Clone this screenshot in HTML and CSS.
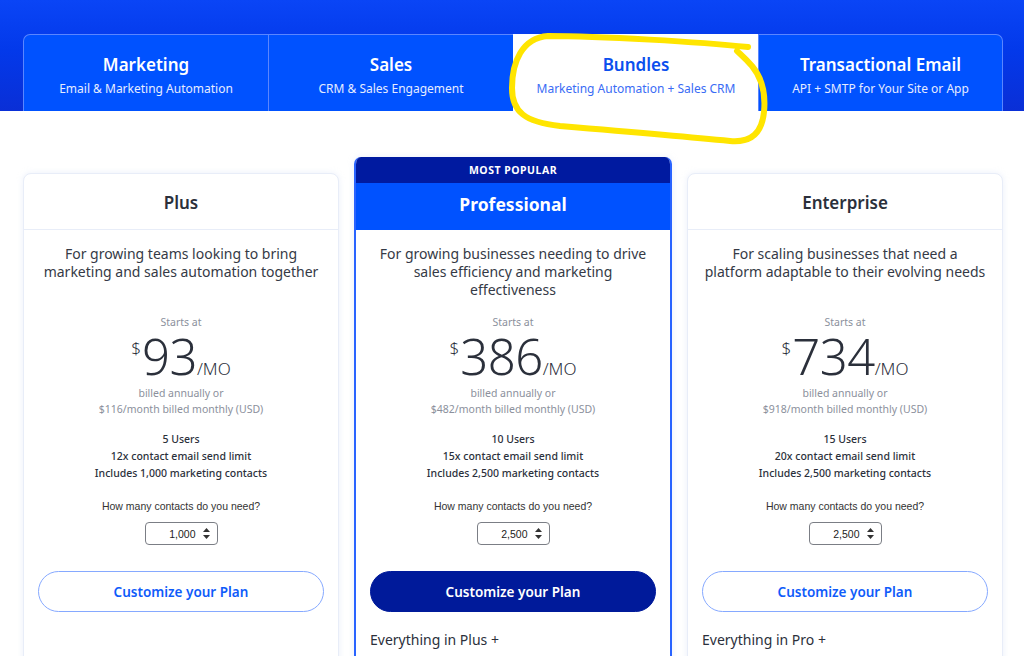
FILE: index.html
```html
<!DOCTYPE html>
<html>
<head>
<meta charset="utf-8">
<link rel="stylesheet" href="styles.css">
</head>
<body>
<header class="hero">
  <nav class="tabs">
    <div class="tab first"><div class="tab-title">Marketing</div><div class="tab-sub">Email &amp; Marketing Automation</div></div>
    <div class="tab"><div class="tab-title">Sales</div><div class="tab-sub">CRM &amp; Sales Engagement</div></div>
    <div class="tab active"><div class="tab-title">Bundles</div><div class="tab-sub">Marketing Automation + Sales CRM</div></div>
    <div class="tab last"><div class="tab-title">Transactional Email</div><div class="tab-sub">API + SMTP for Your Site or App</div></div>
  </nav>
</header>

<main class="plans">
  <section class="card">
    <div class="card-head">Plus</div>
    <div class="card-body">
      <p class="desc">For growing teams looking to bring<br>marketing and sales automation together</p>
      <div class="starts">Starts at</div>
      <div class="price"><span class="cur">$</span><span class="amt">93</span><span class="per">/MO</span></div>
      <div class="billed">billed annually or<br>$116/month billed monthly (USD)</div>
      <div class="feats">5 Users<br>12x contact email send limit<br>Includes 1,000 marketing contacts</div>
      <div class="ask">How many contacts do you need?</div>
      <div class="sel-wrap"><div class="sel"><span>1,000</span><svg width="9" height="13" viewBox="0 0 9 13"><path d="M4.5 1 L8 5 H1 Z M4.5 12 L8 8 H1 Z" fill="#333"/></svg></div></div>
      <button class="cta">Customize your Plan</button>
    </div>
  </section>

  <section class="card pro">
    <div class="badge">MOST POPULAR</div>
    <div class="card-head">Professional</div>
    <div class="card-body">
      <p class="desc">For growing businesses needing to drive<br>sales efficiency and marketing<br>effectiveness</p>
      <div class="starts">Starts at</div>
      <div class="price"><span class="cur">$</span><span class="amt">386</span><span class="per">/MO</span></div>
      <div class="billed">billed annually or<br>$482/month billed monthly (USD)</div>
      <div class="feats">10 Users<br>15x contact email send limit<br>Includes 2,500 marketing contacts</div>
      <div class="ask">How many contacts do you need?</div>
      <div class="sel-wrap"><div class="sel"><span>2,500</span><svg width="9" height="13" viewBox="0 0 9 13"><path d="M4.5 1 L8 5 H1 Z M4.5 12 L8 8 H1 Z" fill="#333"/></svg></div></div>
      <button class="cta solid">Customize your Plan</button>
      <div class="everything">Everything in Plus +</div>
    </div>
  </section>

  <section class="card">
    <div class="card-head">Enterprise</div>
    <div class="card-body">
      <p class="desc">For scaling businesses that need a<br>platform adaptable to their evolving needs</p>
      <div class="starts">Starts at</div>
      <div class="price"><span class="cur">$</span><span class="amt">734</span><span class="per">/MO</span></div>
      <div class="billed">billed annually or<br>$918/month billed monthly (USD)</div>
      <div class="feats">15 Users<br>20x contact email send limit<br>Includes 2,500 marketing contacts</div>
      <div class="ask">How many contacts do you need?</div>
      <div class="sel-wrap"><div class="sel"><span>2,500</span><svg width="9" height="13" viewBox="0 0 9 13"><path d="M4.5 1 L8 5 H1 Z M4.5 12 L8 8 H1 Z" fill="#333"/></svg></div></div>
      <button class="cta">Customize your Plan</button>
      <div class="everything">Everything in Pro +</div>
    </div>
  </section>
</main>

<svg class="scribble" width="1024" height="160" viewBox="0 0 1024 160">
  <path d="M748 47 C 700 42 600 36 548 36 C 522 38 512 62 512 88 C 512 112 525 122 560 126 C 620 131 680 136 730 141 C 752 143 762 132 764 112 C 766 92 762 78 752 66 C 745 58 740 54 737 51" fill="none" stroke="#ffe500" stroke-width="6" stroke-linecap="round" stroke-linejoin="round"/>
</svg>
</body>
</html>
```

FILE: styles.css
```css
* { box-sizing: border-box; }
html, body { margin: 0; padding: 0; }
body {
  background: #ffffff;
  font-family: "Noto Sans", "Open Sans", sans-serif;
  color: #2b303b;
  width: 1024px;
  height: 656px;
  overflow: hidden;
  position: relative;
}

.hero {
  height: 111px;
  padding-top: 34px;
  background: linear-gradient(180deg, #0a45f6 0%, #0339ea 45%, #0a2fd6 100%);
}
.tabs {
  margin-left: 23px;
  width: 980px;
  height: 77px;
  display: grid;
  grid-template-columns: repeat(4, 1fr);
}
.tab {
  background: #0052ff;
  border-top: 1px solid #5a86ff;
  border-left: 1px solid #5a86ff;
  color: #fff;
  text-align: center;
  padding-top: 18px;
}
.tab.first { border-top-left-radius: 7px; }
.tab.last { border-top-right-radius: 7px; border-right: 1px solid #5a86ff; }
.tab.active { background: #ffffff; border-color: #ffffff; }
.tab-title {
  font-size: 17px;
  font-weight: 600;
  line-height: 24px;
}
.tab-sub {
  font-size: 12px;
  line-height: 18px;
  margin-top: 3px;
  color: #e6ecff;
}
.tab.active .tab-title { color: #0b4fee; }
.tab.active .tab-sub { color: #3a6cf5; }

.plans {
  margin-left: 23px;
  width: 980px;
  padding-top: 46px;
  display: grid;
  grid-template-columns: 316px 318px 316px;
  column-gap: 15px;
  align-items: start;
}
.card {
  margin-top: 16px;
  border: 1px solid #e8edf8;
  border-radius: 8px;
  height: 520px;
  background: #fff;
  box-shadow: 0 0 6px rgba(200, 212, 240, 0.35);
}
.card-head {
  height: 56px;
  border-bottom: 1px solid #e8edf8;
  font-size: 17px;
  font-weight: 600;
  line-height: 57px;
  text-align: center;
  color: #2b303b;
}
.card.pro {
  margin-top: 0;
  border: 2px solid #2a64ff;
  border-top: none;
  border-radius: 7px 7px 0 0;
  height: 540px;
  overflow: hidden;
}
.badge {
  height: 26px;
  background: #001aa0;
  color: #fff;
  font-size: 10.5px;
  font-weight: 700;
  letter-spacing: 0.5px;
  text-align: center;
  line-height: 26px;
  margin: 0 -2px;
}
.pro .card-head {
  height: 47px;
  background: #0052ff;
  color: #fff;
  font-size: 17.5px;
  font-weight: 700;
  line-height: 42px;
  border-bottom: none;
  margin: 0 -2px;
}

.card-body {
  padding: 15px 12px 0;
  text-align: center;
}
.desc {
  margin: 0;
  height: 54px;
  font-size: 14px;
  line-height: 18px;
  color: #353a46;
  padding: 0;
  white-space: nowrap;
}
.starts {
  margin-top: 16px;
  font-size: 10.5px;
  line-height: 14px;
  height: 14px;
  color: #8b909c;
}
.price {
  display: flex;
  justify-content: center;
  align-items: baseline;
  height: 46px;
  line-height: 46px;
  margin-top: 4px;
  color: #2b303b;
}
.cur {
  font-size: 17px;
  font-weight: 300;
  line-height: 1;
  align-self: flex-start;
  margin-top: 6px;
  margin-right: 1px;
}
.amt {
  font-size: 49px;
  font-weight: 300;
  line-height: 46px;
  letter-spacing: -0.5px;
}
.per {
  font-size: 17px;
  font-weight: 300;
  line-height: 1;
}
.billed {
  margin-top: 6px;
  font-size: 10.5px;
  line-height: 16px;
  color: #8b909c;
}
.feats {
  margin-top: 14px;
  font-size: 10.5px;
  line-height: 17px;
  color: #2b303b;
  font-weight: 500;
}
.ask {
  margin-top: 16px;
  font-family: "Liberation Sans", Arial, sans-serif;
  font-size: 10.5px;
  line-height: 16px;
  color: #333;
}
.sel-wrap {
  display: flex;
  justify-content: center;
  margin-top: 8px;
}
.sel {
  width: 73px;
  height: 23px;
  border: 1px solid #7b7e85;
  border-radius: 4px;
  display: flex;
  align-items: center;
  justify-content: flex-end;
  gap: 6px;
  padding-right: 6px;
  font-family: "Liberation Sans", Arial, sans-serif;
  font-size: 10.5px;
  color: #222;
}
.cta {
  display: block;
  margin: 26px 2px 0;
  width: calc(100% - 4px);
  height: 41px;
  border-radius: 21px;
  border: 1px solid #86a9ff;
  background: #fff;
  color: #0f5cfa;
  font-family: "Noto Sans", sans-serif;
  font-size: 13.5px;
  font-weight: 600;
  cursor: pointer;
}
.cta.solid {
  background: #001a9a;
  border-color: #001a9a;
  color: #fff;
}
.everything {
  margin-top: 19px;
  text-align: left;
  font-size: 14px;
  line-height: 18px;
  color: #2b303b;
  padding-left: 2px;
}

.scribble {
  position: absolute;
  left: 0;
  top: 0;
  pointer-events: none;
}
```
